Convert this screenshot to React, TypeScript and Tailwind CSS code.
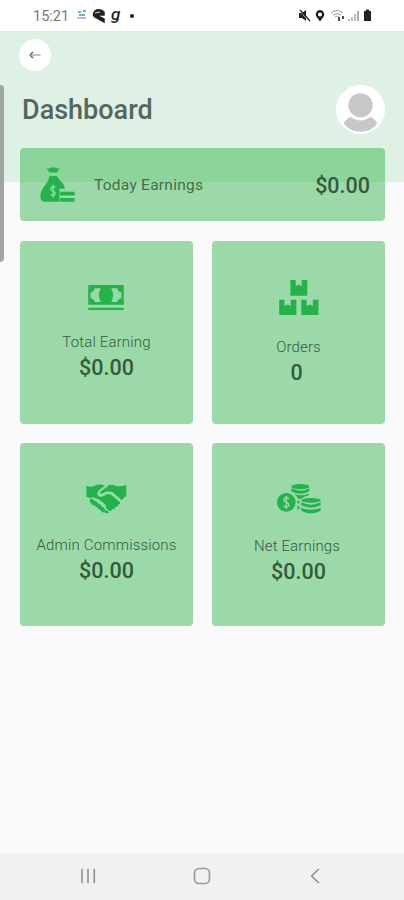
import type { ReactNode } from "react";

const MoneyBagIcon = () => (
  <svg viewBox="0 0 106 106" className="h-[35px] w-[35px] shrink-0" fill="#23b34a">
    <path d="M19 2 Q25 8 31 3 Q40 -1 49 3 Q55 7 61 2 L51 17 H29Z" />
    <path d="M29 27 H51 Q55 34 64 45 Q75 54 75 66 H59 V105 H13 Q0 104 1 88 Q3 69 17 53 Q27 41 29 27Z" />
    <path d="M61 75 H105 V86 H61Z M61 94 H105 V105 H61Z" />
    <path
      d="M47 62 Q43 58 37 60 Q31 63 34 69 Q36 72 41 74 Q48 77 45 83 Q40 90 32 83 M40 54 V92"
      fill="none"
      stroke="#98d9a5"
      strokeWidth="4"
    />
  </svg>
);

const BanknoteIcon = () => (
  <svg viewBox="0 0 108 76" className="h-[25px] w-9 -translate-x-px" fill="#23b34a">
    <path d="M0 0 H108 V60 H0Z M0 69 H108 V76 H0Z" />
    <path
      d="M20 10 H38 Q27 31 38 52 H20 Q19 43 7 40 V23 Q18 20 20 10Z M88 10 H70 Q81 31 70 52 H88 Q89 43 101 40 V23 Q90 20 88 10Z"
      fill="#9bd9a8"
    />
  </svg>
);

const BoxesIcon = () => (
  <svg viewBox="0 0 120 106" className="h-[35px] w-10" fill="#23b34a">
    <path d="M34 0 H50 V19 L59 14 L68 19 V0 H85 V48 H34Z" />
    <path d="M0 60 H16 V79 L26 74 L35 79 V60 H52 V106 H0Z" />
    <path d="M67 60 H83 V79 L93 74 L102 79 V60 H119 V106 H67Z" />
  </svg>
);

const HandshakeIcon = () => (
  <svg viewBox="18 22 122 92" className="h-[31px] w-[41px]" fill="#23b34a">
    <path d="M19 27 Q32 32 43 28 Q58 20 74 27 L57 40 Q47 50 56 58 Q66 63 80 52 L92 53 L119 76 Q122 83 113 83 Q115 91 105 90 Q105 99 96 96 Q94 104 87 102 L77 93 Q80 84 71 81 Q69 72 61 73 Q57 64 48 66 Q40 57 31 64 L19 60Z" />
    <path d="M82 26 Q94 22 105 27 Q121 31 138 25 V58 Q131 59 124 71 L95 45 H77 Q67 54 61 51 Q55 49 60 43Z" />
    <path
      d="M82 27 L59 43 Q54 51 62 53 Q69 53 78 47 H94 L123 72"
      fill="none"
      stroke="#9bd9a8"
      strokeWidth="4.5"
    />
    <path
      d="M35 72 L40 78 M46 79 L51 85 M56 87 L61 93 M66 96 L69 100"
      fill="none"
      stroke="#23b34a"
      strokeWidth="12"
      strokeLinecap="round"
    />
    <path d="M77 99 L87 106 Q83 112 73 107Z" />
  </svg>
);

const CoinsIcon = () => (
  <svg viewBox="0 0 132 90" className="h-[30px] w-11" fill="#23b34a">
    <circle cx="28" cy="55" r="28" />
    <path
      d="M36 45 Q31 39 24 42 Q18 47 24 52 L32 57 Q39 63 32 68 Q24 72 19 65 M28 36 V74"
      fill="none"
      stroke="#9bd9a8"
      strokeWidth="4.5"
    />
    <ellipse cx="70" cy="8" rx="27" ry="8" />
    <path d="M43 13 Q70 27 97 13 V22 Q70 37 43 22Z" />
    <path d="M51 30 Q73 38 96 29 V34 Q79 38 74 44 H64 Q60 36 51 30Z" />
    <path d="M61 50 H68 V58 H61Z M61 67 H68 V76 H61Z" />
    <ellipse cx="102" cy="49" rx="29" ry="7" />
    <path d="M73 55 Q102 69 131 55 V64 Q102 78 73 64Z M73 71 Q102 84 131 71 V80 Q102 96 73 80Z" />
  </svg>
);

const StatusBar = () => (
  <div className="flex h-[31px] items-center justify-between bg-white pl-[33px] pr-[31px]">
    <div className="flex items-center">
      <span className="pt-[3px] text-[14.5px] leading-none text-[#777]">15:21</span>
      <svg viewBox="0 0 34 18" className="ml-2 h-[18px] w-[34px]">
        <path d="M1 5 H4 M6 4 H9 M2 8 H8" stroke="#65b9b0" strokeWidth="2" />
        <path d="M0 11 H9" stroke="#a9c5ed" strokeWidth="2" />
        <path
          d="M27 5 Q22 1 18 4 Q14 9 20 11 L27 15 L27 12 L19 8 L27 8 Z"
          fill="#222"
          stroke="#222"
          strokeWidth="1.5"
        />
        <path d="M18 6 L23 5" stroke="#ddd" />
      </svg>
      <span className="pb-1 text-[17px] font-medium italic leading-5 text-[#222]">g</span>
      <span className="ml-[10px] h-1 w-1 rounded-full bg-[#222]" />
    </div>
    <svg viewBox="0 0 75 14" className="h-3.5 w-[75px]">
      <path d="M1 4 H4 L8 1 V12 L4 9 H1Z" fill="#222" />
      <path d="M1 1 L11 12" stroke="#fff" strokeWidth="1" />
      <path d="M2 1 L12 12" stroke="#222" strokeWidth="1.3" />
      <path
        d="M22 1 A4.5 4.5 0 0 1 26 7 L22 12.5 L18 7 A4.5 4.5 0 0 1 22 1Z M22 3.5 A2 2 0 1 0 22 7.5 A2 2 0 1 0 22 3.5Z"
        fill="#1c1c1c"
        fillRule="evenodd"
      />
      <path d="M33 4 Q39 -1 45 4 M35 6 Q39 3 43 6 M37 8 Q39 6 41 8" fill="none" stroke="#999" strokeWidth="1" />
      <path d="M41 8 V12 M45 7 V10" stroke="#333" strokeWidth="1.7" />
      <path d="M51 10 V12 M54 8 V12 M57 5 V12" stroke="#aaa" strokeWidth="1.6" />
      <path d="M60 2 V12" stroke="#888" strokeWidth="1.4" />
      <path d="M66 2 H68 V0.5 H71 V2 H73 V12 H66Z" fill="#222" />
    </svg>
  </div>
);

const StatCard = ({
  icon,
  label,
  value,
  labelClass = "mt-[15px]",
  valueClass = "",
}: {
  icon: ReactNode;
  label: string;
  value: string;
  labelClass?: string;
  valueClass?: string;
}) => (
  <div className="flex h-[183px] flex-col items-center rounded-[4px] bg-[#9bd9a8] pt-[38px]">
    <div className="flex h-9 items-center">{icon}</div>
    <p className={`whitespace-nowrap text-[15px] font-light leading-5 tracking-[0.15px] text-[#36593f] ${labelClass}`}>
      {label}
    </p>
    <p className={`mt-[3px] text-[21.5px] font-medium leading-[26px] text-[#355a3d] ${valueClass}`}>{value}</p>
  </div>
);

const App = () => {
  return (
    <div className="flex h-[900px] w-[404px] flex-col overflow-hidden bg-[#fafafa] font-['Roboto',sans-serif]">
      <StatusBar />
      <main className="relative flex-1 bg-[linear-gradient(#dff0e5_151px,#fafafa_151px)] pl-5 pr-[19px]">
        {/* edge panel handle */}
        <div className="absolute left-0 top-[54px] h-[177px] w-1 rounded-r-[4px] bg-[#a0a5a2]" />

        <div className="pt-2">
          <button className="flex h-8 w-8 -translate-x-px items-center justify-center rounded-full bg-white">
            <svg viewBox="0 0 12 10" className="h-2.5 w-3" fill="none">
              <path d="M4 2 L1 5 L4 8" stroke="#555" strokeWidth="1.3" />
              <path d="M1 5 H11.5" stroke="#999" strokeWidth="1.2" />
            </svg>
          </button>
        </div>

        <div className="mt-[13px] flex h-[50px] items-center justify-between">
          <h1 className="pl-0.5 pt-0.5 text-[27px] font-medium leading-none text-[#55675c]">Dashboard</h1>
          <svg viewBox="0 0 150 150" className="h-[49px] w-[49px]">
            <circle cx="75" cy="75" r="75" fill="#fff" />
            <circle cx="75" cy="62" r="37" fill="#c8c6c7" />
            <path d="M44 97 Q75 120 106 97 Q119 104 127 118 Q107 143 75 143 Q43 143 23 118 Q31 104 44 97Z" fill="#c8c6c7" />
          </svg>
        </div>

        <div className="mt-[14px] flex h-[73px] items-center rounded-[4px] bg-[linear-gradient(#8cd49a_34px,#9bd9a8_34px)] pl-5 pr-[15px]">
          <MoneyBagIcon />
          <p className="ml-[19px] flex-1 pt-[3px] text-[15.5px] tracking-[0.25px] text-[#3f7049]">Today Earnings</p>
          <p className="pt-[3px] text-[21.5px] font-medium text-[#355a3d]">$0.00</p>
        </div>

        <div className="mt-5 grid grid-cols-2 gap-x-[19px] gap-y-[19px]">
          <StatCard icon={<BanknoteIcon />} label="Total Earning" value="$0.00" labelClass="mt-[17px]" valueClass="-mt-px" />
          <StatCard icon={<BoxesIcon />} label="Orders" value="0" labelClass="mt-[22px]" valueClass="pr-1" />
          <StatCard icon={<HandshakeIcon />} label="Admin Commissions" value="$0.00" labelClass="mt-[18px]" />
          <StatCard icon={<CoinsIcon />} label="Net Earnings" value="$0.00" labelClass="mt-[19px] pr-[3px]" />
        </div>
      </main>

      <nav className="flex h-[47px] items-center justify-between bg-[#f1f1f1] pb-0.5 pl-20 pr-[84px]">
        <svg viewBox="0 0 16 16" className="h-4 w-4" stroke="#8b8b8b" strokeWidth="1.5">
          <path d="M2 1 V15 M8 1 V15 M14.3 1 V15" />
        </svg>
        <svg viewBox="0 0 18 18" className="mr-[3px] h-[18px] w-[18px]" fill="none" stroke="#999" strokeWidth="1.7">
          <rect x="1.5" y="1.5" width="15" height="15" rx="4.5" />
        </svg>
        <svg viewBox="0 0 10 16" className="h-4 w-2.5" fill="none" stroke="#8b8b8b" strokeWidth="1.5">
          <path d="M9 1 L1.5 8 L9 15" />
        </svg>
      </nav>
    </div>
  );
};

export default App;
